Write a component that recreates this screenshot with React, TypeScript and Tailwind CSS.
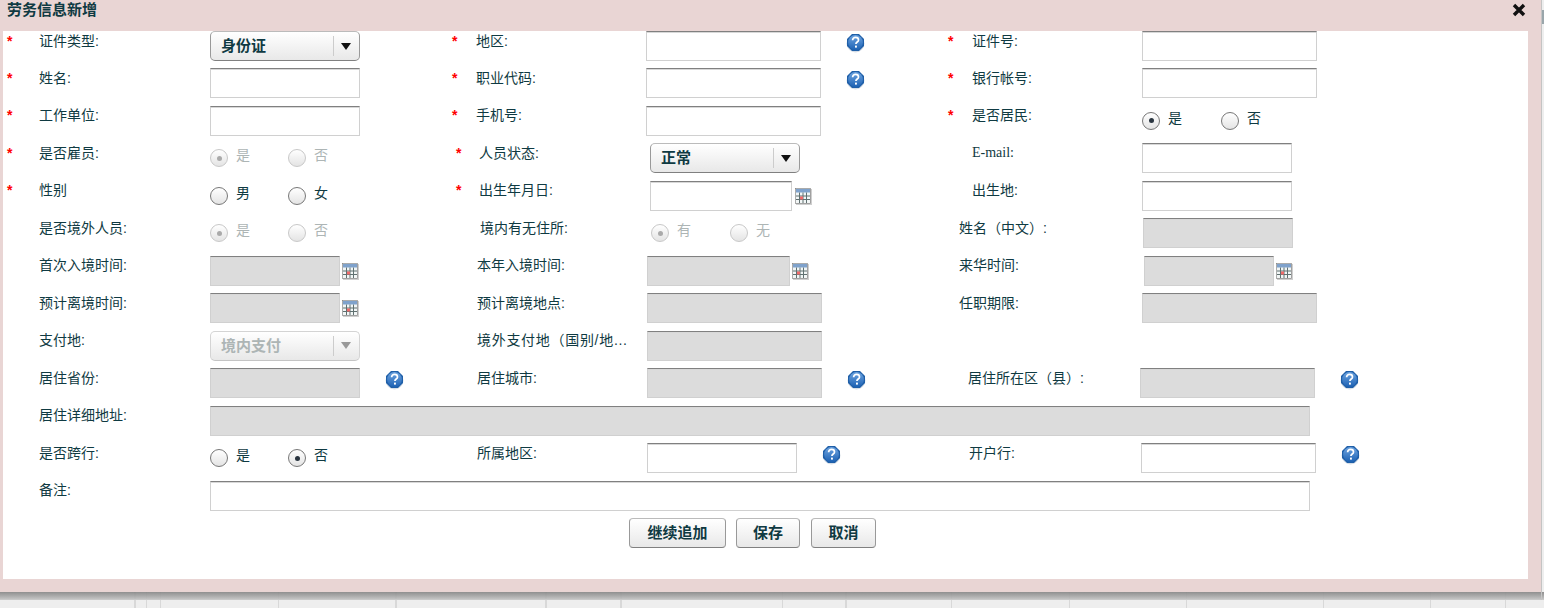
import type { ReactNode } from "react";

const font = { fontFamily: '"Liberation Sans", "Noto Sans CJK SC", sans-serif' };

function Star({ className }: { className: string }) {
    return <span className={`text-[14px] leading-[14px] text-[#f00] font-bold shrink-0 ${className}`}>*</span>;
}

// 左侧标签：star 是星号占位宽度，pad 是左边距
function Label({ text, star, pad = "", textClass = "" }: { text: string; star?: string; pad?: string; textClass?: string }) {
    return (
        <div className={`flex items-start pt-[2.5px] ${pad}`}>
            {star && <Star className={star} />}
            <span className={`text-[14px] leading-[14px] whitespace-nowrap text-[#0f3a42] ${textClass}`}>{text}</span>
        </div>
    );
}

function TextInput({ className = "w-[175px]", disabled }: { className?: string; disabled?: boolean }) {
    return (
        <div
            className={`h-[30px] border border-[#d0d0d0] border-t-[#808080] shadow-[inset_0_1px_0_#d8d8d8] shrink-0 ${
                disabled ? "bg-[#dcdcdc]" : "bg-white"
            } ${className}`}
        />
    );
}

function Select({ value, disabled, className = "" }: { value: string; disabled?: boolean; className?: string }) {
    return (
        <div
            className={`flex items-center w-[150px] h-[30px] rounded-[5px] border bg-gradient-to-b from-white to-[#e8e8e8] ${
                disabled ? "border-[#d4d4d4] border-b-[#c4c4c4]" : "border-[#bbb] border-b-[#808080] border-r-[#999] border-l-[#999]"
            } ${className}`}
        >
            <span className={`pl-[10px] w-[122px] text-[15px] font-bold ${disabled ? "text-[#adb5b5]" : "text-[#0f3a42]"}`}>{value}</span>
            <span className="w-[1px] h-[20px] bg-[#ccc]" />
            <span
                className={`ml-[7px] w-0 h-0 border-x-[5px] border-x-transparent border-t-[7px] ${
                    disabled ? "border-t-[#999]" : "border-t-[#111]"
                }`}
            />
        </div>
    );
}

function Radio({ checked, disabled, label, className = "" }: { checked?: boolean; disabled?: boolean; label: string; className?: string }) {
    return (
        <div className={`flex items-start ${className}`}>
            <span
                className={`mt-[6px] flex items-center justify-center w-[18px] h-[18px] rounded-full border bg-gradient-to-b from-white to-[#e4e4e4] shrink-0 ${
                    disabled ? "border-[#c8c8c8]" : "border-[#777]"
                }`}
            >
                {checked && <span className={`w-[5px] h-[5px] rounded-full ${disabled ? "bg-[#aaa]" : "bg-[#2a3540]"}`} />}
            </span>
            <span className={`ml-[8px] pt-[5px] text-[14px] leading-[14px] ${disabled ? "text-[#adb5b5]" : "text-[#0f3a42]"}`}>{label}</span>
        </div>
    );
}

function Radios({ a, b, on, disabled, className = "", gap = "w-[78px]" }: { a: string; b: string; on: "a" | "b" | "none"; disabled?: boolean; className?: string; gap?: string }) {
    return (
        <div className={`flex ${className}`}>
            <Radio label={a} checked={on === "a"} disabled={disabled} className={gap} />
            <Radio label={b} checked={on === "b"} disabled={disabled} />
        </div>
    );
}

function HelpIcon({ className = "" }: { className?: string }) {
    return (
        <svg width="19" height="20" viewBox="0 0 19 20" className={`mt-[2px] shrink-0 ${className}`}>
            <defs>
                <linearGradient id="helpBlue" x1="0" y1="0" x2="0" y2="1">
                    <stop offset="0" stopColor="#6ea4e0" />
                    <stop offset="1" stopColor="#1d62b4" />
                </linearGradient>
            </defs>
            <circle cx="9.5" cy="10.5" r="9" fill="#d5dde6" />
            <path d="M6 1h7l5 5v7l-5 5H6l-5-5V6z" fill="#1f5fa8" />
            <circle cx="9.5" cy="9.5" r="7.4" fill="url(#helpBlue)" />
            <path d="M6.6 7.2c0-1.8 1.3-2.8 3-2.8s2.9 1 2.9 2.5c0 2-2.6 2.2-2.6 4.2" fill="none" stroke="#fff" strokeWidth="1.7" />
            <rect x="9" y="12.6" width="1.9" height="2" fill="#fff" />
        </svg>
    );
}

function CalendarIcon({ className = "" }: { className?: string }) {
    return (
        <svg width="17" height="17" viewBox="0 0 17 17" className={`shrink-0 ${className}`}>
            <rect x="1" y="1" width="16" height="16" fill="#cfcfcf" />
            <rect x="0.5" y="0.5" width="15" height="15" fill="#f2f6f6" stroke="#777" strokeWidth="0.6" />
            <rect x="1" y="1" width="14" height="3.5" fill="#7fa2cc" />
            <path d="M1 8h14M1 11.5h14M4.5 4.5v10.5M8 4.5v10.5M11.5 4.5v10.5" stroke="#5f7070" strokeWidth="1" />
            <rect x="5" y="8.5" width="3" height="3" fill="#f06a6a" />
        </svg>
    );
}

function Row({ children }: { children: ReactNode }) {
    return <div className="grid grid-cols-[207px_242px_194px_302px_194px_1fr] h-[37.48px]">{children}</div>;
}

function Ctl({ children, className = "" }: { children?: ReactNode; className?: string }) {
    return <div className={`flex items-start ${className}`}>{children}</div>;
}

const c1 = { star: "w-[32px]", pad: "pl-[4px]" };
const c1n = { pad: "pl-[36px]" };
const c3 = { star: "w-[24px]" };
const c3s = { star: "w-[23px]", pad: "pl-[4px]" };
const c3n = { pad: "pl-[25px]" };
const c5 = { star: "w-[24px]" };
const c5n = { pad: "pl-[11px]" };
const c5w = { pad: "pl-[24px]" };

function Button({ children, className }: { children: ReactNode; className: string }) {
    return (
        <div
            className={`flex items-center justify-center h-[30px] rounded-[4px] border border-[#bbb] border-b-[#808080] border-x-[#999] bg-gradient-to-b from-white to-[#e8e8e8] text-[15px] font-bold text-[#0f3a42] ${className}`}
        >
            {children}
        </div>
    );
}

const gridStops = [
    "left-[134px] w-[2px]", "left-[146px] w-[1px]", "left-[160px] w-[1px]", "left-[278px] w-[1px]",
    "left-[395px] w-[2px]", "left-[545px] w-[2px]", "left-[620px] w-[2px]", "left-[782px] w-[1px]",
    "left-[845px] w-[2px]", "left-[951px] w-[1px]", "left-[1069px] w-[1px]", "left-[1186px] w-[1px]",
    "left-[1323px] w-[1px]", "left-[1430px] w-[1px]", "left-[1505px] w-[1px]",
];

export default function App() {
    return (
        <div style={font} className="relative w-[1544px] h-[608px] overflow-hidden bg-[#eee]">
            {/* 背后表格的列线和弹窗阴影 */}
            {gridStops.map(s => (
                <div key={s} className={`absolute top-[592px] bottom-0 bg-[#d8d8d8] ${s}`} />
            ))}
            <div className="absolute left-0 right-0 top-[592px] h-[7px] bg-gradient-to-b from-[#858585] to-[#bdbdbd] opacity-90" />
            <div className="absolute left-0 right-0 top-[599px] h-[1px] bg-[#c8c8c8]" />
            <div className="absolute left-[1541px] top-0 w-[1px] h-[600px] bg-[#c4c4c4]" />
            <div className="absolute left-[1542px] top-[10px] w-[2px] h-[14px] bg-[#9aa6ab]" />

            <div className="relative w-[1541px] h-[592px] bg-[#e9d5d4] flex flex-col">
                <div className="flex items-start justify-between h-[31px] pl-[7px] pr-[15px]">
                    <span className="pt-[1px] text-[15px] leading-[18px] font-bold text-[#0f3a42]">劳务信息新增</span>
                    <svg width="14" height="14" viewBox="0 0 14 14" className="mt-[3px]">
                        <path d="M2 2l10 10M12 2L2 12" stroke="#111" strokeWidth="3.4" />
                    </svg>
                </div>
                <div className="ml-[3px] w-[1525px] h-[548px] bg-white">
                    <Row>
                        <Label text="证件类型:" {...c1} />
                        <Ctl><Select value="身份证" /></Ctl>
                        <Label text="地区:" {...c3} />
                        <Ctl><TextInput /><HelpIcon className="ml-[25px]" /></Ctl>
                        <Label text="证件号:" {...c5} />
                        <Ctl><TextInput /></Ctl>
                    </Row>
                    <Row>
                        <Label text="姓名:" {...c1} />
                        <Ctl><TextInput className="w-[150px]" /></Ctl>
                        <Label text="职业代码:" {...c3} />
                        <Ctl><TextInput /><HelpIcon className="ml-[25px]" /></Ctl>
                        <Label text="银行帐号:" {...c5} />
                        <Ctl><TextInput /></Ctl>
                    </Row>
                    <Row>
                        <Label text="工作单位:" {...c1} />
                        <Ctl><TextInput className="w-[150px]" /></Ctl>
                        <Label text="手机号:" {...c3} />
                        <Ctl><TextInput /></Ctl>
                        <Label text="是否居民:" {...c5} />
                        <Radios a="是" b="否" on="a" gap="w-[79px]" />
                    </Row>
                    <Row>
                        <Label text="是否雇员:" {...c1} />
                        <Radios a="是" b="否" on="a" disabled />
                        <Label text="人员状态:" {...c3s} />
                        <Ctl className="pl-[4px]"><Select value="正常" /></Ctl>
                        <Label text="E-mail:" {...c5w} textClass="font-['Liberation_Serif']" />
                        <Ctl><TextInput className="w-[150px]" /></Ctl>
                    </Row>
                    <Row>
                        <Label text="性别" {...c1} />
                        <Radios a="男" b="女" on="none" />
                        <Label text="出生年月日:" {...c3s} />
                        <Ctl className="pl-[4px]"><TextInput className="w-[142px]" /><CalendarIcon className="ml-[3px] mt-[7px]" /></Ctl>
                        <Label text="出生地:" {...c5w} />
                        <Ctl><TextInput className="w-[150px]" /></Ctl>
                    </Row>
                    <Row>
                        <Label text="是否境外人员:" {...c1n} />
                        <Radios a="是" b="否" on="a" disabled />
                        <Label text="境内有无住所:" pad="pl-[28px]" />
                        <Radios a="有" b="无" on="a" disabled className="pl-[5px]" gap="w-[79px]" />
                        <Label text="姓名（中文）:" {...c5n} />
                        <Ctl className="pl-[1px]"><TextInput className="w-[150px]" disabled /></Ctl>
                    </Row>
                    <Row>
                        <Label text="首次入境时间:" {...c1n} />
                        <Ctl><TextInput className="w-[130px]" disabled /><CalendarIcon className="ml-[2px] mt-[7px]" /></Ctl>
                        <Label text="本年入境时间:" {...c3n} />
                        <Ctl className="pl-[1px]"><TextInput className="w-[143px]" disabled /><CalendarIcon className="ml-[2px] mt-[7px]" /></Ctl>
                        <Label text="来华时间:" {...c5n} />
                        <Ctl className="pl-[2px]"><TextInput className="w-[130px]" disabled /><CalendarIcon className="ml-[2px] mt-[7px]" /></Ctl>
                    </Row>
                    <Row>
                        <Label text="预计离境时间:" {...c1n} />
                        <Ctl><TextInput className="w-[130px]" disabled /><CalendarIcon className="ml-[2px] mt-[7px]" /></Ctl>
                        <Label text="预计离境地点:" {...c3n} />
                        <Ctl className="pl-[1px]"><TextInput disabled /></Ctl>
                        <Label text="任职期限:" {...c5n} />
                        <Ctl><TextInput disabled /></Ctl>
                    </Row>
                    <Row>
                        <Label text="支付地:" {...c1n} />
                        <Ctl><Select value="境内支付" disabled /></Ctl>
                        <Label text="境外支付地（国别/地..." {...c3n} textClass="tracking-[0.7px]" />
                        <Ctl className="pl-[1px]"><TextInput disabled /></Ctl>
                        <div />
                        <div />
                    </Row>
                    <Row>
                        <Label text="居住省份:" {...c1n} />
                        <Ctl><TextInput className="w-[150px]" disabled /><HelpIcon className="ml-[25px]" /></Ctl>
                        <Label text="居住城市:" {...c3n} />
                        <Ctl className="pl-[1px]"><TextInput disabled /><HelpIcon className="ml-[25px]" /></Ctl>
                        <Label text="居住所在区（县）:" pad="pl-[20px]" />
                        <Ctl className="-ml-[2px]"><TextInput disabled /><HelpIcon className="ml-[25px]" /></Ctl>
                    </Row>
                    <Row>
                        <Label text="居住详细地址:" {...c1n} />
                        <Ctl className="col-span-5"><TextInput className="w-[1100px]" disabled /></Ctl>
                    </Row>
                    <Row>
                        <Label text="是否跨行:" {...c1n} />
                        <Radios a="是" b="否" on="b" />
                        <Label text="所属地区:" {...c3n} />
                        <Ctl className="pl-[1px]"><TextInput className="w-[150px]" /><HelpIcon className="ml-[25px]" /></Ctl>
                        <Label text="开户行:" pad="pl-[21px]" />
                        <Ctl className="-ml-[1px]"><TextInput /><HelpIcon className="ml-[25px]" /></Ctl>
                    </Row>
                    <Row>
                        <Label text="备注:" {...c1n} />
                        <Ctl className="col-span-5"><TextInput className="w-[1100px]" /></Ctl>
                    </Row>
                    <div className="flex pl-[626px]">
                        <Button className="w-[97px]">继续追加</Button>
                        <Button className="w-[64px] ml-[10px]">保存</Button>
                        <Button className="w-[65px] ml-[11px]">取消</Button>
                    </div>
                </div>
            </div>
        </div>
    );
}
